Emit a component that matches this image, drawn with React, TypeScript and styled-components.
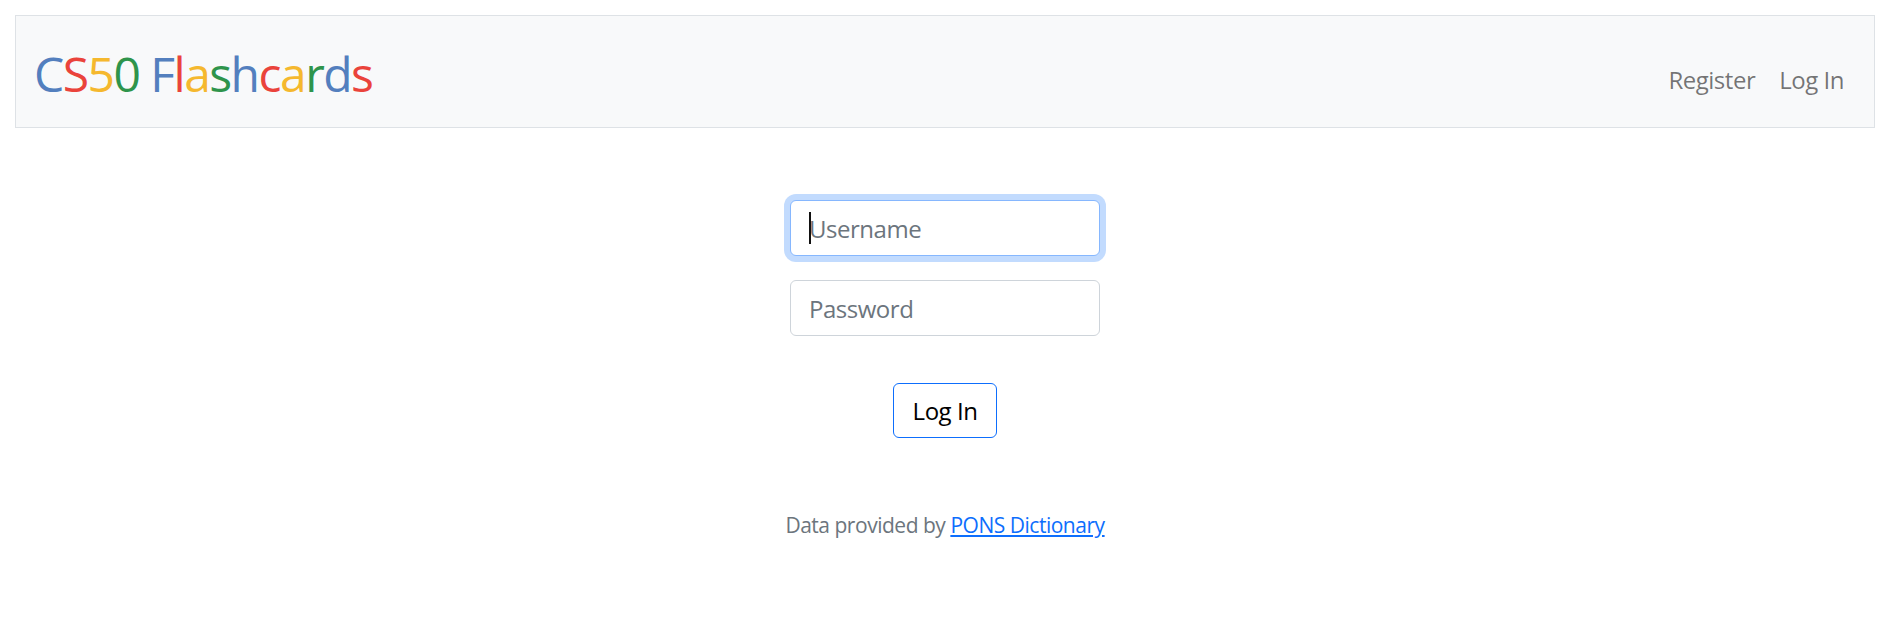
import React from "react";
import styled, { createGlobalStyle } from "styled-components";

const Global = createGlobalStyle`
  html, body { margin: 0; padding: 0; background: #fff; }
  body {
    font-family: "Open Sans", "Noto Sans", "Liberation Sans", sans-serif;
    font-size: 24px;
    line-height: 1.5;
    letter-spacing: -0.02em;
    color: #212529;
  }
  * { box-sizing: border-box; }
`;

const Page = styled.div`
  padding: 15px 19px 0 15px;
`;

const Nav = styled.nav`
  display: flex;
  align-items: center;
  justify-content: space-between;
  height: 113px;
  padding: 0 18px;
  background: #f8f9fa;
  border: 1px solid #dee2e6;
`;

const Brand = styled.a`
  font-size: 48px;
  line-height: 1.2;
  letter-spacing: -0.032em;
  text-decoration: none;
  margin-top: 4px;
`;

const Letter = styled.span<{ $c: string }>`
  color: ${(p) => p.$c};
`;

const NavLinks = styled.ul`
  display: flex;
  list-style: none;
  margin: 16px 0 0;
  padding: 0;
`;

const NavLink = styled.a`
  display: block;
  padding: 12px 12px;
  color: rgba(0, 0, 0, 0.55);
  text-decoration: none;
`;

const Main = styled.main`
  padding: 72px 0;
  display: flex;
  justify-content: center;
`;

const Form = styled.form`
  display: flex;
  flex-direction: column;
  align-items: center;
`;

const Field = styled.div<{ $mb: number }>`
  position: relative;
  margin-bottom: ${(p) => p.$mb}px;
`;

const Caret = styled.span`
  position: absolute;
  left: 19px;
  top: 12px;
  width: 2px;
  height: 32px;
  background: #111;
`;

const Input = styled.input<{ $focused?: boolean }>`
  display: block;
  width: 310px;
  height: 56px;
  padding: 9px 18px;
  font-family: inherit;
  font-size: 24px;
  line-height: 1.5;
  letter-spacing: -0.02em;
  color: #212529;
  background: #fff;
  border: 1px solid ${(p) => (p.$focused ? "#86b7fe" : "#ced4da")};
  border-radius: 6px;
  outline: none;
  box-shadow: ${(p) => (p.$focused ? "0 0 0 6px rgba(13, 110, 253, 0.25)" : "none")};
  &::placeholder { color: #6c757d; }
`;

const Button = styled.button`
  font-family: inherit;
  font-size: 24px;
  line-height: 1.5;
  letter-spacing: -0.02em;
  width: 104px;
  height: 55px;
  padding: 9px 0;
  color: #000;
  background: #fff;
  border: 1px solid #0d6efd;
  border-radius: 6px;
`;

const Footer = styled.footer`
  text-align: center;
  font-size: 21px;
  color: #6c757d;
`;

const Link = styled.a`
  color: #0d6efd;
  text-decoration: underline;
`;

const brand: [string, string][] = [
  ["C", "#537fbe"],
  ["S", "#ea433b"],
  ["5", "#f5b82e"],
  ["0", "#2e944b"],
  [" ", "#537fbe"],
  ["F", "#537fbe"],
  ["l", "#ea433b"],
  ["a", "#f5b82e"],
  ["s", "#2e944b"],
  ["h", "#537fbe"],
  ["c", "#ea433b"],
  ["a", "#f5b82e"],
  ["r", "#2e944b"],
  ["d", "#537fbe"],
  ["s", "#ea433b"],
];

export default function App() {
  return (
    <Page>
      <Global />
      <Nav>
        <Brand href="#">
          {brand.map(([ch, c], i) => (
            <Letter key={i} $c={c}>
              {ch}
            </Letter>
          ))}
        </Brand>
        <NavLinks>
          <li>
            <NavLink href="#">Register</NavLink>
          </li>
          <li>
            <NavLink href="#">Log In</NavLink>
          </li>
        </NavLinks>
      </Nav>
      <Main>
        <Form onSubmit={(e) => e.preventDefault()}>
          <Field $mb={24}>
            <Input $focused autoComplete="off" name="username" placeholder="Username" type="text" />
            <Caret />
          </Field>
          <Field $mb={47}>
            <Input name="password" placeholder="Password" type="password" />
          </Field>
          <Button type="submit">Log In</Button>
        </Form>
      </Main>
      <Footer>
        Data provided by <Link href="#">PONS Dictionary</Link>
      </Footer>
    </Page>
  );
}
